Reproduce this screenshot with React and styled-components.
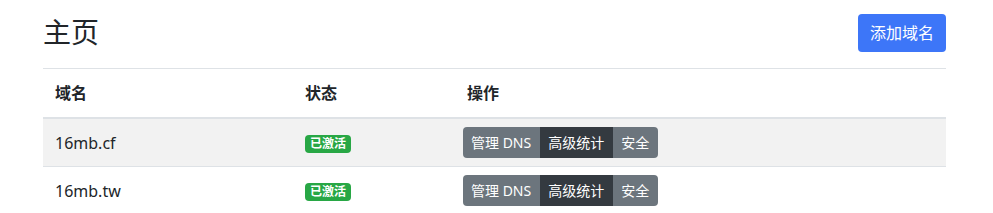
import styled, { createGlobalStyle } from 'styled-components'

const GlobalStyle = createGlobalStyle`
  body {
    margin: 0;
    background: #fff;
    color: #212529;
    font-family: "Segoe UI", "Noto Sans", "Noto Sans CJK SC", sans-serif;
  }
`

const Page = styled.div`
  padding: 0 47px 0 43px;
`

const Header = styled.div`
  display: flex;
  justify-content: space-between;
  align-items: center;
  padding: 14px 0 16px;
  border-bottom: 1px solid #dee2e6;
`

const Title = styled.h1`
  margin: 0;
  font-size: 28px;
  font-weight: 400;
  line-height: 1.2;
`

const PrimaryButton = styled.button`
  font-family: inherit;
  font-size: 16px;
  line-height: 24px;
  padding: 7px 12px;
  border: none;
  border-radius: 4px;
  background: #3d76f8;
  color: #fff;
  cursor: pointer;
`

const Table = styled.table`
  width: 100%;
  border-collapse: collapse;
  font-size: 16px;
`

const Th = styled.th`
  text-align: left;
  font-weight: 700;
  padding: 12px;
  line-height: 24px;
  border-bottom: 2px solid #dee2e6;
  width: ${(p) => p.$width || 'auto'};
`

const Row = styled.tr`
  background: ${(p) => (p.$striped ? '#f2f2f2' : '#fff')};
`

const Td = styled.td`
  padding: 8px ${(p) => (p.$tight ? '8px' : '12px')};
  line-height: 24px;
  vertical-align: middle;
  border-bottom: 1px solid #dee2e6;
`

const Badge = styled.span`
  display: inline-block;
  background: #28a745;
  color: #fff;
  font-size: 12px;
  font-weight: 700;
  line-height: 14px;
  padding: 2px 5px;
  border-radius: 4px;
  vertical-align: middle;
`

const Group = styled.div`
  display: inline-flex;
  border-radius: 4px;
  overflow: hidden;
  vertical-align: middle;
`

const GroupButton = styled.button`
  font-family: inherit;
  font-size: 14px;
  line-height: 21px;
  padding: 5px 9px 5px 8px;
  border: none;
  color: #fff;
  background: ${(p) => (p.$dark ? '#343a40' : '#6c757d')};
`

const domains = ['16mb.cf', '16mb.tw']

export default function App() {
  return (
    <Page>
      <GlobalStyle />
      <Header>
        <Title>主页</Title>
        <PrimaryButton>添加域名</PrimaryButton>
      </Header>
      <Table>
        <thead>
          <tr>
            <Th $width="226px">域名</Th>
            <Th $width="138px">状态</Th>
            <Th>操作</Th>
          </tr>
        </thead>
        <tbody>
          {domains.map((d, i) => (
            <Row key={d} $striped={i % 2 === 0}>
              <Td>{d}</Td>
              <Td>
                <Badge>已激活</Badge>
              </Td>
              <Td $tight>
                <Group>
                  <GroupButton>管理 DNS</GroupButton>
                  <GroupButton $dark>高级统计</GroupButton>
                  <GroupButton>安全</GroupButton>
                </Group>
              </Td>
            </Row>
          ))}
        </tbody>
      </Table>
    </Page>
  )
}
